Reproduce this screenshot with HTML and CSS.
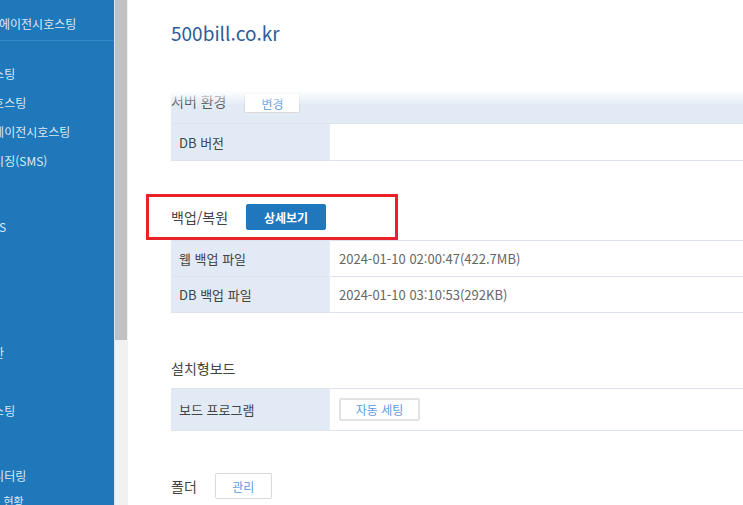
FILE: index.html
```html
<!DOCTYPE html>
<html lang="ko">
<head>
  <meta charset="UTF-8">
  <meta name="viewport" content="width=device-width, initial-scale=1.0">
  <title>500bill.co.kr - 호스팅 관리</title>
  <link rel="stylesheet" href="styles.css">
</head>
<body>
  <div class="page">
    <aside class="side">
      <div class="side-inner">
        <div class="side-title">에이전시호스팅</div>
        <ul class="menu first">
          <li>단독호스팅</li>
          <li>쇼핑몰호스팅</li>
          <li>빌더형에이전시호스팅</li>
          <li>문자메시징(SMS)</li>
        </ul>
        <ul class="menu grp2">
          <li>메일DNS</li>
          <li>FTP</li>
          <li>DB</li>
        </ul>
        <ul class="menu grp3">
          <li>접근권한</li>
          <li>로그</li>
          <li>전용호스팅</li>
        </ul>
        <ul class="menu grp4">
          <li>서버모니터링</li>
          <li class="sub">트래픽 현황</li>
        </ul>
      </div>
    </aside>
    <div class="side-scroll"><div class="thumb"></div></div>

    <main class="main">
      <header class="site-head">
        <h1>500bill.co.kr</h1>
      </header>

      <section>
        <div class="sec-head band">
          <h2>서버 환경</h2>
          <button class="btn btn-sm">변경</button>
        </div>
        <table class="tbl">
          <tr><th>DB 버전</th><td></td></tr>
        </table>
      </section>

      <section class="sec">
        <div class="sec-head mark">
          <h2>백업/복원</h2>
          <button class="btn btn-blue">상세보기</button>
        </div>
        <table class="tbl tight">
          <tr><th>웹 백업 파일</th><td>2024-01-10 02:00:47(422.7MB)</td></tr>
          <tr><th>DB 백업 파일</th><td>2024-01-10 03:10:53(292KB)</td></tr>
        </table>
      </section>

      <section class="sec board">
        <div class="sec-head">
          <h2>설치형보드</h2>
        </div>
        <table class="tbl">
          <tr class="tall"><th>보드 프로그램</th><td><button class="btn btn-set">자동 세팅</button></td></tr>
        </table>
      </section>

      <section class="sec last">
        <div class="sec-head">
          <h2>폴더</h2>
          <button class="btn btn-md">관리</button>
        </div>
      </section>
    </main>
  </div>
</body>
</html>
```

FILE: styles.css
```css
html, body {
  margin: 0;
  padding: 0;
  height: 100%;
  overflow: hidden;
}
body {
  font-family: "Noto Sans CJK KR", "Noto Sans", sans-serif;
  background: #fff;
  color: #444;
}
.page {
  display: flex;
  height: 505px;
}

/* left menu, scrolled sideways */
.side {
  width: 114px;
  flex: none;
  background: #1e78ba;
  overflow: hidden;
}
.side-inner {
  margin-left: -40px;
  color: #dde9f5;
  font-size: 12px;
  white-space: nowrap;
}
.side-title {
  height: 40px;
  line-height: 48px;
  padding-left: 39px;
  border-bottom: 1px solid #3287c4;
}
.menu {
  list-style: none;
  margin: 0;
  padding: 0;
}
.menu li {
  line-height: 29px;
}
.menu.first { margin-top: 18px; }
.menu.grp2 { margin-top: 37px; }
.menu.grp3 { margin-top: 39px; }
.menu.grp4 { margin-top: 36px; }
.menu li.sub {
  font-size: 11px;
  line-height: 22px;
  padding-left: 10px;
}

.side-scroll {
  width: 13px;
  flex: none;
  background: #f1f1f1;
  border-left: 1px solid #d6e7f4;
}
.thumb {
  width: 12px;
  height: 340px;
  background: #c1c1c1;
}

/* content */
.main {
  flex: 1;
  min-width: 0;
  padding-left: 43px;
}
.site-head {
  position: relative;
  z-index: 1;
  height: 88px;
}
.site-head h1 {
  margin: 0;
  padding-top: 21px;
  font-size: 19px;
  line-height: 24px;
  font-weight: 400;
  color: #2f5d9a;
}
.site-head::after {
  content: "";
  position: absolute;
  left: -43px;
  right: 0;
  top: 100%;
  height: 17px;
  background: linear-gradient(#fff 15%, rgba(255, 255, 255, 0));
}

.sec { margin-top: 33px; }
.sec.board { margin-top: 35px; }
.sec.last { margin-top: 35px; }

.sec-head {
  display: flex;
  align-items: center;
  gap: 18px;
  height: 40px;
}
.sec-head h2 {
  margin: 0;
  font-size: 14px;
  font-weight: 400;
  color: #444;
}
.sec-head.band {
  height: 35px;
  align-items: flex-start;
  padding-top: 5px;
  box-sizing: border-box;
  background: #e2ebf5;
}
.sec-head.band h2 {
  line-height: 17px;
  color: #555;
}
.sec-head.mark {
  box-sizing: border-box;
  width: 252px;
  height: 46px;
  margin-left: -25px;
  padding-left: 22px;
  border: 3px solid #e8222b;
}

.tbl {
  width: 100%;
  border-collapse: collapse;
  font-size: 13px;
}
.tbl tr {
  border-top: 1px solid #dde3ea;
  border-bottom: 1px solid #dde3ea;
}
.tbl th {
  width: 150px;
  height: 36px;
  padding: 0 0 0 8px;
  background: #e2ebf5;
  border-right: 1px solid #e8edf3;
  text-align: left;
  font-weight: 400;
  color: #444;
}
.tbl td {
  padding: 0 9px;
  color: #666;
}
.tbl.tight th { height: 35px; }
.tbl tr.tall th { height: 41px; }

.btn {
  font-family: inherit;
  font-size: 12px;
  background: #fff;
  color: #5b9ade;
  border: 1px solid #dadada;
  border-radius: 2px;
  padding: 0;
  cursor: pointer;
}
.btn-sm {
  width: 56px;
  height: 20px;
}
.btn-md {
  width: 57px;
  height: 26px;
}
.btn-set {
  width: 81px;
  height: 23px;
  display: block;
  border-width: 2px;
  border-color: #e2e2e2;
}
.btn-blue {
  width: 80px;
  height: 26px;
  background: #1f77bd;
  border-color: #1f77bd;
  color: #fff;
  font-weight: 700;
}
```
